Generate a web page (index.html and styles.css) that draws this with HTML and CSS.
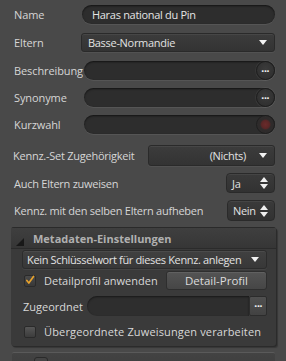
FILE: index.html
```html
<!DOCTYPE html>
<html>
<head>
<meta charset="utf-8">
<link rel="stylesheet" href="styles.css">
</head>
<body>
<div class="page">
  <div class="row r-name">
    <span class="label">Name</span>
    <div class="pill"><span class="pill-text">Haras national du Pin</span></div>
  </div>
  <div class="row r-eltern">
    <span class="label">Eltern</span>
    <div class="select"><span class="select-text">Basse-Normandie</span><span class="caret"></span></div>
  </div>
  <div class="row r-beschr">
    <span class="label">Beschreibung</span>
    <div class="pill pill-btn"><span class="pill-text"></span><span class="dots">...</span></div>
  </div>
  <div class="row r-syn">
    <span class="label">Synonyme</span>
    <div class="pill pill-btn"><span class="pill-text"></span><span class="dots">...</span></div>
  </div>
  <div class="row r-kurz">
    <span class="label">Kurzwahl</span>
    <div class="pill pill-btn"><span class="pill-text"></span><span class="rec"></span></div>
  </div>
  <div class="row r-set">
    <span class="label wide">Kennz.-Set Zugehörigkeit</span>
    <div class="select select-set"><span class="select-text right">(Nichts)</span><span class="caret"></span></div>
  </div>
  <div class="row r-ja">
    <span class="label wide">Auch Eltern zuweisen</span>
    <div class="spin spin-ja"><span>Ja</span><span class="updown"></span></div>
  </div>
  <div class="row r-nein">
    <span class="label wide">Kennz. mit den selben Eltern aufheben</span>
    <div class="spin spin-nein"><span>Nein</span><span class="updown"></span></div>
  </div>

  <div class="panel">
    <div class="panel-head"><span class="tri"></span><span class="panel-title">Metadaten-Einstellungen</span></div>
    <div class="panel-body">
      <div class="select inner-select"><span class="select-text">Kein Schlüsselwort für dieses Kennz. anlegen</span><span class="caret"></span></div>
      <div class="prow p-detail">
        <span class="check checked"><svg width="12" height="12" viewBox="0 0 12 12"><path d="M2.2 6.6 L4.6 9.6 L10.2 1.8" fill="none" stroke="#e7a22c" stroke-width="2" stroke-linecap="round" stroke-linejoin="round"/></svg></span>
        <span class="ctext">Detailprofil anwenden</span>
        <span class="btn">Detail-Profil</span>
      </div>
      <div class="prow p-zug">
        <span class="plabel">Zugeordnet</span>
        <div class="zfield"></div>
        <span class="sqbtn">...</span>
      </div>
      <div class="prow p-ueber">
        <span class="check"></span>
        <span class="ctext wide-text">Übergeordnete Zuweisungen verarbeiten</span>
      </div>
    </div>
  </div>
  <div class="next-panel"><span class="next-check"></span></div>
</div>
</body>
</html>
```
FILE: styles.css
```css
html, body {
  margin: 0;
  padding: 0;
  background: #494949;
  overflow: hidden;
}
body {
  font-family: "Open Sans", "DejaVu Sans", sans-serif;
  font-size: 11px;
  color: #d6d6d6;
}
.page {
  width: 286px;
  height: 361px;
  padding-top: 5px;
  box-sizing: border-box;
  background: #494949;
}
.row {
  display: flex;
  align-items: center;
  padding: 0 11px 0 14px;
}
.label {
  width: 68px;
  flex: none;
  white-space: nowrap;
  letter-spacing: -0.1px;
}
.label.wide { width: auto; flex: 1; letter-spacing: -0.25px; }
.r-name { height: 19px; }
.r-eltern { height: 19px; margin-top: 9px; }
.r-beschr { height: 19px; margin-top: 9px; }
.r-syn { height: 19px; margin-top: 8px; }
.r-kurz { height: 19px; margin-top: 8px; }
.r-set { height: 21px; margin-top: 11px; padding-left: 13px; }
.r-ja { height: 20px; margin-top: 7px; }
.r-nein { height: 21px; margin-top: 7px; }

.pill {
  flex: 1;
  height: 19px;
  border-radius: 10px;
  background: #2d2d2d;
  box-shadow: inset 0 1px 2px rgba(0,0,0,0.6), 0 1px 0 rgba(255,255,255,0.07);
  display: flex;
  align-items: center;
  box-sizing: border-box;
  padding-left: 10px;
}
.r-beschr .pill, .r-syn .pill, .r-kurz .pill { margin-left: 2px; }
.pill-text { flex: 1; color: #e4e4e4; white-space: nowrap; font-size: 11px; letter-spacing: -0.3px; }
.pill-btn { padding-right: 0; }
.dots {
  width: 19px;
  height: 19px;
  border-radius: 50%;
  box-sizing: border-box;
  background: radial-gradient(circle at 50% 40%, #3b3b3b, #2c2c2c);
  border: 1px solid #1f1f1f;
  box-shadow: 0 0 0 1px rgba(255,255,255,0.05);
  color: #ececec;
  font-family: "DejaVu Sans", sans-serif;
  font-size: 9px;
  font-weight: bold;
  line-height: 14px;
  text-align: center;
  letter-spacing: -0.8px;
  padding-right: 1px;
}
.rec {
  width: 19px;
  height: 19px;
  border-radius: 50%;
  box-sizing: border-box;
  border: 1px solid #1f1f1f;
  background: radial-gradient(circle at 50% 50%, #6a2b2b 0, #5a2626 4px, #2f2b2b 5.5px, #2c2c2c 100%);
}

.select {
  flex: 1;
  height: 19px;
  border-radius: 3px;
  box-sizing: border-box;
  background: linear-gradient(#3c3c3c, #333333);
  border: 1px solid #2a2a2a;
  box-shadow: inset 0 1px 0 rgba(255,255,255,0.06), 0 1px 0 rgba(255,255,255,0.05);
  display: flex;
  align-items: center;
  padding: 0 7px 0 6px;
}
.r-eltern .select { margin-left: -1px; }
.select-text { flex: 1; white-space: nowrap; overflow: hidden; color: #e2e2e2; font-size: 11px; letter-spacing: -0.3px; }
.select-text.right { text-align: right; padding-right: 9px; }
.caret {
  width: 0; height: 0;
  border-left: 4px solid transparent;
  border-right: 4px solid transparent;
  border-top: 5px solid #f2f2f2;
  margin-left: 4px;
  flex: none;
}
.select-set {
  flex: none;
  width: 127px;
  height: 21px;
}

.spin {
  flex: none;
  height: 100%;
  box-sizing: border-box;
  border-radius: 4px;
  background: linear-gradient(#3a3a3a, #323232);
  border: 1px solid #2a2a2a;
  box-shadow: inset 0 1px 0 rgba(255,255,255,0.06);
  display: flex;
  align-items: center;
  padding: 0 5px 0 5px;
  color: #e2e2e2;
  font-size: 11px;
  letter-spacing: -0.3px;
}
.spin span:first-child { flex: 1; }
.spin-ja { width: 49px; }
.spin-nein { width: 48px; }
.updown {
  width: 9px;
  height: 12px;
  position: relative;
  flex: none;
}
.updown::before, .updown::after {
  content: "";
  position: absolute;
  left: 0;
  border-left: 4.5px solid transparent;
  border-right: 4.5px solid transparent;
}
.updown::before { top: 0; border-bottom: 5px solid #f0f0f0; }
.updown::after { bottom: 0; border-top: 5px solid #f0f0f0; }

.panel {
  margin: 6px 10px 0 11px;
  height: 119px;
  background: #3a3a3a;
  border-radius: 3px;
  box-shadow: 1px 1px 0 #2b2b2b, 2px 2px 1px rgba(0,0,0,0.25);
  display: flex;
  flex-direction: column;
  overflow: hidden;
}
.panel-head {
  height: 22px;
  flex: none;
  background: linear-gradient(#3f3f3f, #363636);
  border-top: 1px solid #2a2a2a;
  border-bottom: 1px solid #2b2b2b;
  display: flex;
  align-items: center;
  box-sizing: border-box;
  padding-left: 5px;
}
.tri {
  width: 0; height: 0;
  border-left: 8px solid transparent;
  border-bottom: 8px solid #181818;
  margin-top: 7px;
  margin-right: 9px;
}
.panel-title {
  font-weight: bold;
  color: #b0b0b0;
  font-size: 11px;
  letter-spacing: 0px;
}
.panel-body {
  padding: 1px 9px 0 11px;
  display: flex;
  flex-direction: column;
}
.inner-select {
  flex: none;
  height: 19px;
  background: linear-gradient(#404040, #383838);
  border-color: #2c2c2c;
  padding-left: 4px;
  padding-right: 7px;
}
.inner-select .select-text { letter-spacing: -0.35px; }
.prow {
  display: flex;
  align-items: center;
}
.p-detail { height: 19px; margin-top: 2px; padding-left: 2px; }
.p-zug { height: 20px; margin-top: 6px; padding-left: 1px; }
.p-ueber { height: 13px; margin-top: 9px; padding-left: 2px; }
.check {
  width: 12px;
  height: 12px;
  flex: none;
  box-sizing: border-box;
  border-radius: 2px;
  background: linear-gradient(#565656, #3c3c3c);
  border: 1px solid #2a2a2a;
  display: flex;
  align-items: center;
  justify-content: center;
}
.check.checked { background: linear-gradient(#4a4a4a, #383838); }
.check svg { display: block; margin-top: -1px; }
.ctext { margin-left: 8px; white-space: nowrap; color: #d8d8d8; flex: 1; }
.wide-text { letter-spacing: 0.15px; }
.btn {
  flex: none;
  width: 101px;
  height: 19px;
  box-sizing: border-box;
  border-radius: 3px;
  background: linear-gradient(#545454, #464646);
  border: 1px solid #2e2e2e;
  box-shadow: inset 0 1px 0 rgba(255,255,255,0.08);
  color: #dcdcdc;
  text-align: center;
  line-height: 17px;
  font-size: 11.5px;
}
.plabel { width: 64px; flex: none; color: #d8d8d8; }
.zfield {
  flex: 1;
  height: 20px;
  border-radius: 10px 0 0 10px;
  background: #2e2e2e;
  box-shadow: inset 0 1px 2px rgba(0,0,0,0.5);
}
.sqbtn {
  width: 18px;
  height: 20px;
  flex: none;
  box-sizing: border-box;
  border-radius: 2px;
  background: linear-gradient(#505050, #424242);
  border: 1px solid #2c2c2c;
  color: #ececec;
  font-family: "DejaVu Sans", sans-serif;
  font-size: 9px;
  font-weight: bold;
  letter-spacing: -0.8px;
  text-align: center;
  line-height: 14px;
}
.next-panel {
  margin: 6px 11px 0 12px;
  height: 20px;
  background: linear-gradient(#434343, #3c3c3c);
  border-top: 1px solid #5a5a5a;
  border-radius: 2px 2px 0 0;
  position: relative;
}
.next-check {
  position: absolute;
  left: 22px;
  top: 4px;
  width: 12px;
  height: 12px;
  border-radius: 3px;
  border: 1px solid #2a2a2a;
  background: #444;
}
```
